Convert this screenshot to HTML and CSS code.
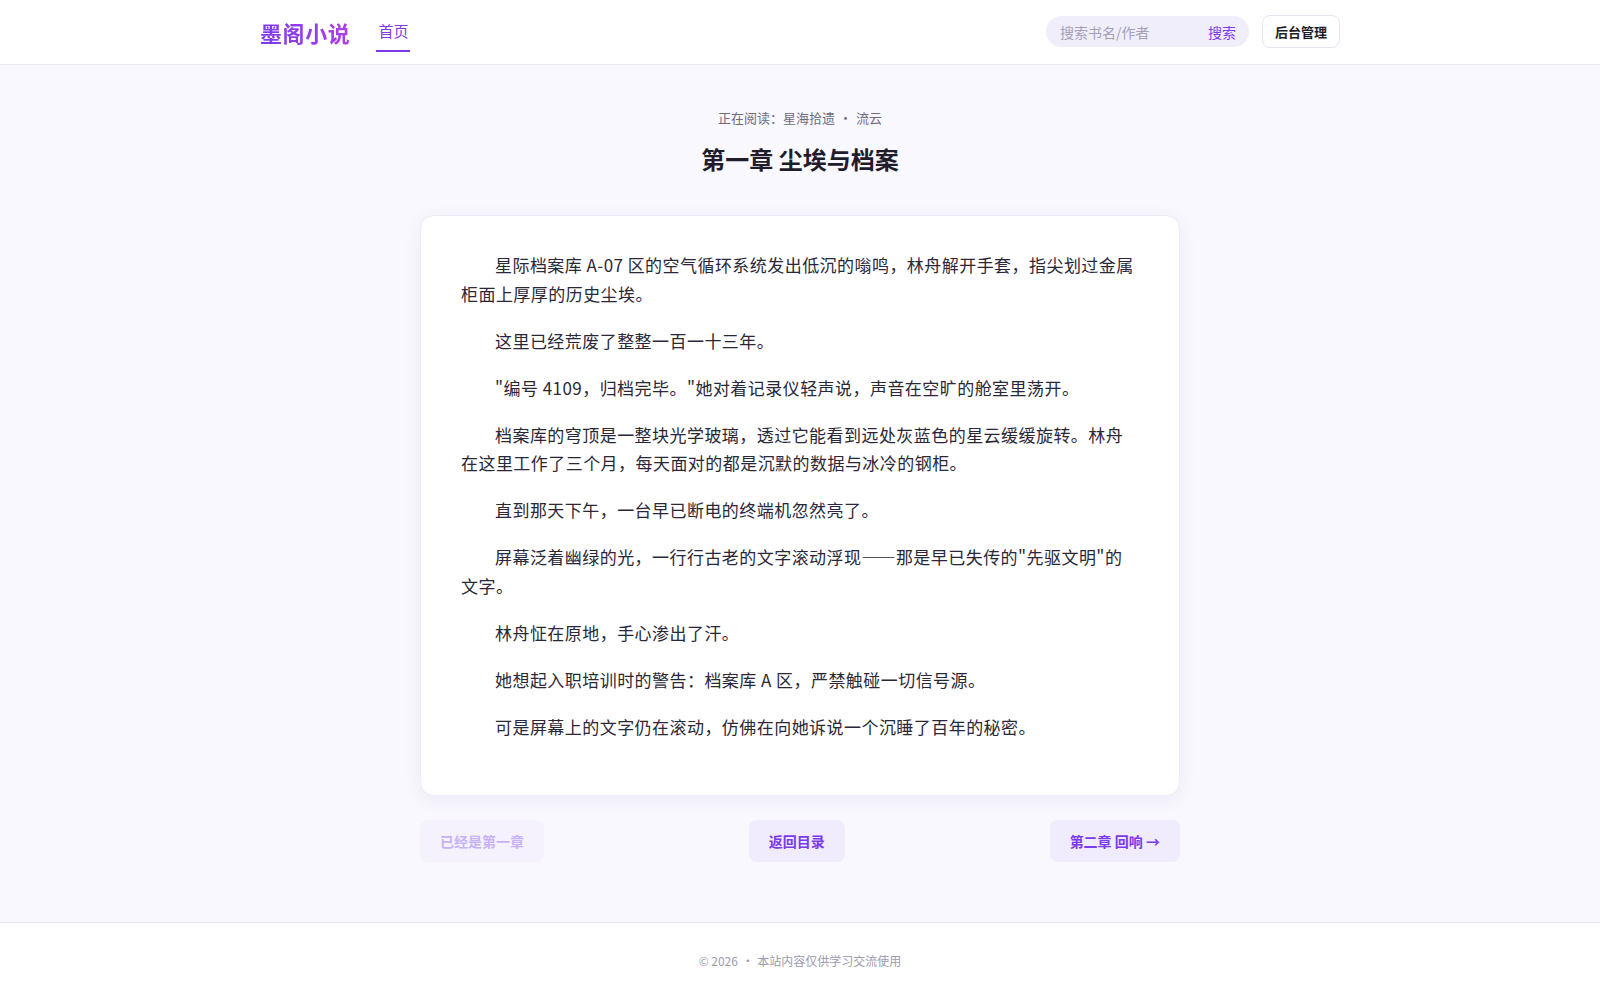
FILE: index.html
```html
<!DOCTYPE html>
<html lang="zh-CN">
<head>
<meta charset="utf-8">
<title>第一章 尘埃与档案 - 墨阁小说</title>
<link rel="stylesheet" href="styles.css">
</head>
<body>
<header class="site-header">
  <div class="header-inner">
    <div class="brand-group">
      <a class="logo" href="#">墨阁小说</a>
      <nav class="main-nav">
        <a class="nav-link active" href="#">首页</a>
      </nav>
    </div>
    <div class="header-actions">
      <form class="search-box">
        <input class="search-input" type="text" placeholder="搜索书名/作者">
        <button class="search-btn" type="button">搜索</button>
      </form>
      <a class="admin-btn" href="#">后台管理</a>
    </div>
  </div>
</header>

<main class="reader">
  <div class="reader-inner">
    <p class="reading-meta">正在阅读：星海拾遗 <span class="dot">·</span> 流云</p>
    <h1 class="chapter-title">第一章 尘埃与档案</h1>
    <article class="chapter-card">
      <p>星际档案库 A-07 区的空气循环系统发出低沉的嗡鸣，林舟解开手套，指尖划过金属柜面上厚厚的历史尘埃。</p>
      <p>这里已经荒废了整整一百一十三年。</p>
      <p>"编号 4109，归档完毕。"她对着记录仪轻声说，声音在空旷的舱室里荡开。</p>
      <p>档案库的穹顶是一整块光学玻璃，透过它能看到远处灰蓝色的星云缓缓旋转。林舟在这里工作了三个月，每天面对的都是沉默的数据与冰冷的钢柜。</p>
      <p>直到那天下午，一台早已断电的终端机忽然亮了。</p>
      <p>屏幕泛着幽绿的光，一行行古老的文字滚动浮现——那是早已失传的"先驱文明"的文字。</p>
      <p>林舟怔在原地，手心渗出了汗。</p>
      <p>她想起入职培训时的警告：档案库 A 区，严禁触碰一切信号源。</p>
      <p>可是屏幕上的文字仍在滚动，仿佛在向她诉说一个沉睡了百年的秘密。</p>
    </article>
    <div class="chapter-nav">
      <span class="chap-btn disabled">已经是第一章</span>
      <a class="chap-btn" href="#">返回目录</a>
      <a class="chap-btn" href="#">第二章 回响 →</a>
    </div>
  </div>
</main>

<footer class="site-footer">
  <p>© 2026 <span class="dot">·</span> 本站内容仅供学习交流使用</p>
</footer>
</body>
</html>
```

FILE: styles.css
```css
* {
  box-sizing: border-box;
}

html, body {
  margin: 0;
  padding: 0;
}

body {
  font-family: "Noto Sans CJK SC", "Noto Sans", "Liberation Sans", sans-serif;
  background: #f9f8fe;
  color: #26242f;
}

a {
  text-decoration: none;
}

/* Header */
.site-header {
  background: #ffffff;
  border-bottom: 1px solid #ebe8f4;
}

.header-inner {
  max-width: 1080px;
  margin: 0 auto;
  height: 64px;
  display: flex;
  align-items: center;
  justify-content: space-between;
}

.brand-group {
  display: flex;
  align-items: center;
  gap: 26px;
}

.logo {
  font-size: 22px;
  font-weight: 700;
  letter-spacing: 0.6px;
  line-height: 30px;
  margin-top: -1px;
  background: linear-gradient(90deg, #7c3aed 0%, #b03fe6 100%);
  -webkit-background-clip: text;
  background-clip: text;
  color: transparent;
}

.main-nav {
  display: flex;
  align-items: center;
}

.nav-link {
  font-size: 15px;
  line-height: 22px;
  color: #7c3aed;
  padding: 6px 2px 8px;
  border-bottom: 2px solid transparent;
  margin-top: 1px;
}

.nav-link.active {
  border-bottom-color: #7c3aed;
}

.header-actions {
  display: flex;
  align-items: center;
  gap: 13px;
}

.search-box {
  margin: 0;
  width: 203px;
  height: 31px;
  border-radius: 16px;
  background: #f1eefc;
  display: flex;
  align-items: center;
  padding: 0 13px 0 14px;
  margin-top: -1px;
}

.search-input {
  flex: 1;
  min-width: 0;
  border: none;
  outline: none;
  background: transparent;
  font-family: inherit;
  font-size: 14px;
  color: #2a2838;
  padding: 0;
}

.search-input::placeholder {
  color: #a3a0b8;
}

.search-btn {
  border: none;
  background: transparent;
  padding: 0;
  font-family: inherit;
  font-size: 14px;
  color: #7c3aed;
  cursor: pointer;
  margin-top: 1px;
}

.admin-btn {
  display: inline-flex;
  align-items: center;
  height: 33px;
  padding: 0 12px;
  margin-top: -1px;
  border: 1px solid #e7e3f5;
  border-radius: 8px;
  background: #ffffff;
  font-size: 13px;
  font-weight: 700;
  color: #1f1d2b;
}

/* Reader */
.reader {
  padding: 43px 0 60px;
}

.reader-inner {
  max-width: 760px;
  margin: 0 auto;
}

.reading-meta {
  margin: 0;
  text-align: center;
  font-size: 13px;
  line-height: 20px;
  color: #6f6c80;
}

.reading-meta .dot {
  margin: 0 1px;
}

.chapter-title {
  margin: 14px 0 39px;
  text-align: center;
  font-size: 24px;
  line-height: 34px;
  font-weight: 700;
  color: #1f1d2b;
}

.chapter-card {
  background: #ffffff;
  border: 1px solid #eeebf6;
  border-radius: 14px;
  box-shadow: 0 4px 18px rgba(60, 40, 120, 0.07);
  padding: 35px 40px 35px;
}

.chapter-card p {
  margin: 0 0 18px;
  font-size: 17px;
  line-height: 1.7;
  letter-spacing: 0.45px;
  text-indent: 2em;
  color: #2a2838;
}

.chapter-nav {
  margin-top: 24px;
  display: flex;
  justify-content: space-between;
  align-items: center;
}

.chap-btn {
  display: inline-flex;
  align-items: center;
  height: 42px;
  padding: 0 20px;
  border-radius: 8px;
  background: #f0ebfd;
  color: #7c3aed;
  font-size: 14px;
  font-weight: 700;
}

.chap-btn.disabled {
  background: #f5f2fd;
  color: #c7b2f6;
}

/* Footer */
.site-footer {
  background: #ffffff;
  border-top: 1px solid #ebe8f4;
  padding: 28px 0;
}

.site-footer p {
  margin: 0;
  text-align: center;
  font-size: 12px;
  line-height: 20px;
  color: #9d9ab0;
}

.site-footer .dot {
  margin: 0 1px;
}
```
